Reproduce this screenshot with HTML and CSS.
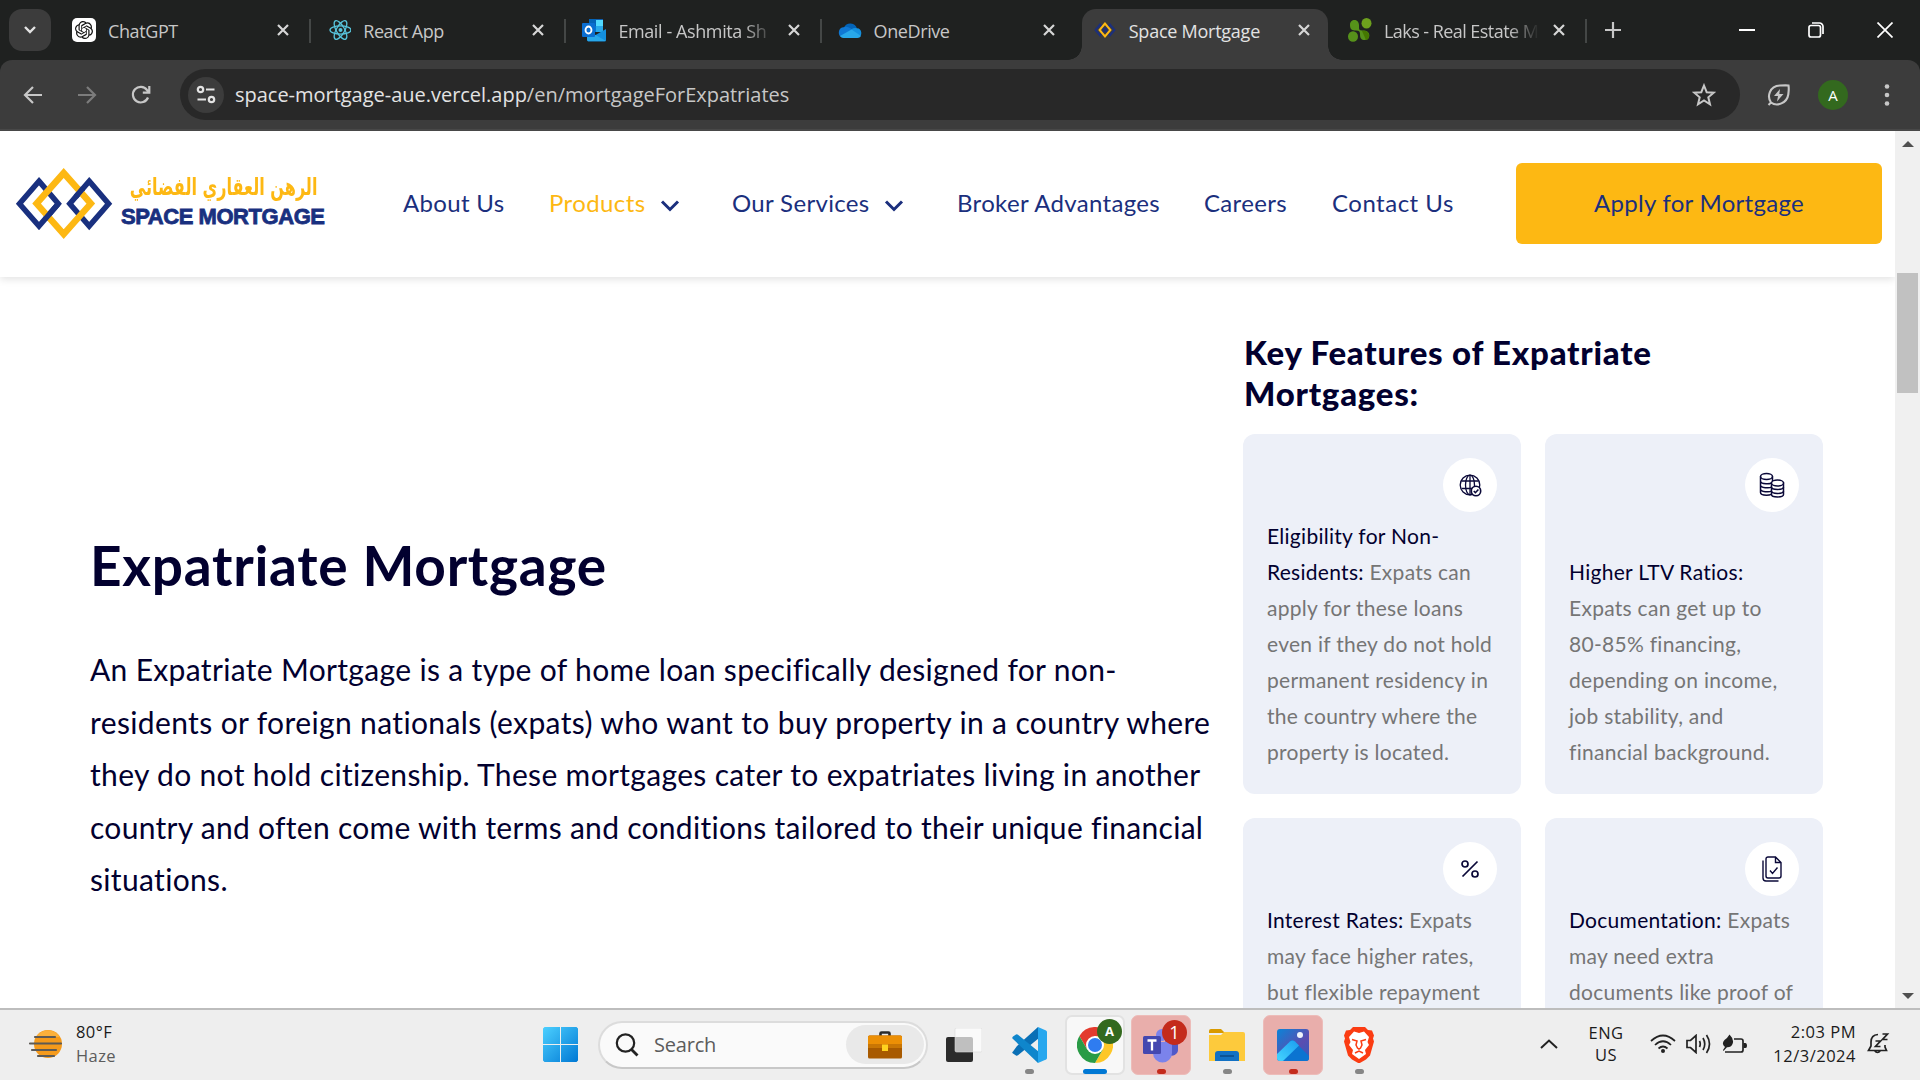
FILE: index.html
```html
<!DOCTYPE html>
<html lang="en">
<head>
<meta charset="utf-8">
<title>Space Mortgage</title>
<link rel="stylesheet" href="styles.css">
</head>
<body>
<div class="screen">

<div class="tabstrip">
  <div class="tab-search"><svg width="14" height="10" viewBox="0 0 14 10"><path d="M2 2l5 5 5-5" fill="none" stroke="#e3e3e3" stroke-width="2.4"/></svg></div>
  <div class="tab"><svg class="fav" viewBox="0 0 24 24"><rect width="24" height="24" rx="5" fill="#fff"/><g transform="translate(3 3) scale(.75)"><path fill="#111" d="M22.2819 9.8211a5.9847 5.9847 0 0 0-.5157-4.9108 6.0462 6.0462 0 0 0-6.5098-2.9A6.0651 6.0651 0 0 0 4.9807 4.1818a5.9847 5.9847 0 0 0-3.9977 2.9 6.0462 6.0462 0 0 0 .7427 7.0966 5.98 5.98 0 0 0 .511 4.9107 6.051 6.051 0 0 0 6.5146 2.9001A5.9847 5.9847 0 0 0 13.2599 24a6.0557 6.0557 0 0 0 5.7718-4.2058 5.9894 5.9894 0 0 0 3.9977-2.9001 6.0557 6.0557 0 0 0-.7475-7.0729zm-9.022 12.6081a4.4755 4.4755 0 0 1-2.8764-1.0408l.1419-.0804 4.7783-2.7582a.7948.7948 0 0 0 .3927-.6813v-6.7369l2.02 1.1686a.071.071 0 0 1 .038.052v5.5826a4.504 4.504 0 0 1-4.4945 4.4944zm-9.6607-4.1254a4.4708 4.4708 0 0 1-.5346-3.0137l.142.0852 4.783 2.7582a.7712.7712 0 0 0 .7806 0l5.8428-3.3685v2.3324a.0804.0804 0 0 1-.0332.0615L9.74 19.9502a4.4992 4.4992 0 0 1-6.1408-1.6464zM2.3408 7.8956a4.485 4.485 0 0 1 2.3655-1.9728V11.6a.7664.7664 0 0 0 .3879.6765l5.8144 3.3543-2.0201 1.1685a.0757.0757 0 0 1-.071 0l-4.8303-2.7865A4.504 4.504 0 0 1 2.3408 7.872zm16.5963 3.8558L13.1038 8.364 15.1192 7.2a.0757.0757 0 0 1 .071 0l4.8303 2.7913a4.4944 4.4944 0 0 1-.6765 8.1042v-5.6772a.79.79 0 0 0-.407-.667zm2.0107-3.0231l-.142-.0852-4.7735-2.7818a.7759.7759 0 0 0-.7854 0L9.409 9.2297V6.8974a.0662.0662 0 0 1 .0284-.0615l4.8303-2.7866a4.4992 4.4992 0 0 1 6.6802 4.66zM8.3065 12.863l-2.02-1.1638a.0804.0804 0 0 1-.038-.0567V6.0742a4.4992 4.4992 0 0 1 7.3757-3.4537l-.142.0805L8.704 5.459a.7948.7948 0 0 0-.3927.6813zm1.0976-2.3654l2.602-1.4998 2.6069 1.4998v2.9994l-2.5974 1.4997-2.6067-1.4997Z"/></g></svg><span class="tab-title">ChatGPT</span><svg class="x" viewBox="0 0 14 14"><path d="M2 2l10 10M12 2L2 12"/></svg></div>
  <div class="tab"><svg class="fav" viewBox="0 0 24 24"><g transform="translate(1.500 0)"><g fill="none" stroke="#58c4dc" stroke-width="1.3"><ellipse cx="12" cy="12" rx="10.5" ry="4.1"/><ellipse cx="12" cy="12" rx="10.5" ry="4.1" transform="rotate(60 12 12)"/><ellipse cx="12" cy="12" rx="10.5" ry="4.1" transform="rotate(120 12 12)"/></g><circle cx="12" cy="12" r="2" fill="#58c4dc"/></g></svg><span class="tab-title">React App</span><svg class="x" viewBox="0 0 14 14"><path d="M2 2l10 10M12 2L2 12"/></svg></div>
  <div class="tab"><svg class="fav" viewBox="0 0 24 24"><path d="M7 1h14v13H7z" fill="#0f5fae"/><path d="M7 1h7v6H7z" fill="#0364b8"/><path d="M14 2h7v6h-7z" fill="#50d9ff"/><path d="M14 8h7v6h-7z" fill="#28a8ea"/><path d="M7 8h7v6H7z" fill="#0078d4"/><path d="M5 22l19-11v11a1.500 1.500 0 0 1-1.500 1.500H6z" fill="#1490df"/><path d="M5 12l19 11H6.500A1.500 1.500 0 0 1 5 22z" fill="#28a8ea"/><rect y="5" width="13" height="14" rx="1" fill="#0a6ed1"/><ellipse cx="6.500" cy="12" rx="3" ry="3.500" fill="none" stroke="#fff" stroke-width="1.800"/></svg><span class="tab-title fade">Email - Ashmita Sh</span><svg class="x" viewBox="0 0 14 14"><path d="M2 2l10 10M12 2L2 12"/></svg></div>
  <div class="tab noline"><svg class="fav" viewBox="0 0 24 24"><path d="M6 9.500a7 7 0 0 1 13 1l-8 6-8-6z" fill="#0364b8"/><path d="M6 9.200c3-1 5 .3 8 2.300l-6 8H5A5.200 5.200 0 0 1 6 9.200z" fill="#0f78d4"/><path d="M13.500 11.300a6 6 0 0 1 5.500-1 4.600 4.600 0 0 1 1 9L12 17z" fill="#1490df"/><path d="M2 18l11.500-6.500L23 18a4.600 4.600 0 0 1-3.500 2H5.500A5 5 0 0 1 2 18z" fill="#28a8ea"/></svg><span class="tab-title">OneDrive</span><svg class="x" viewBox="0 0 14 14"><path d="M2 2l10 10M12 2L2 12"/></svg></div>
  <div class="tab active noline"><svg class="fav" viewBox="0 0 24 24"><g fill="none" stroke-width="2"><path d="M7 6.500L2.500 12 7 17.500l4.500-5.500zM17 6.500L12.500 12l4.500 5.500 4.500-5.500z" stroke="#1b2f7d"/><path d="M12 5.500L6.600 12l5.400 6.500 5.400-6.500z" stroke="#fdb813"/></g></svg><span class="tab-title">Space Mortgage</span><svg class="x" viewBox="0 0 14 14"><path d="M2 2l10 10M12 2L2 12"/></svg></div>
  <div class="tab"><svg class="fav" viewBox="0 0 24 24"><g fill="#56921a"><path d="M2 7C2 0 11 .500 11 7v3c0 2.500 2 2.500 5 2.500 7 0 7 9.500 1 9.500-4 0-5-2-5-6 0-2.500-1-3.500-4-3.500-4 0-6-1-6-5.500z"/><ellipse cx="18.500" cy="5.200" rx="5" ry="5.200" fill="#6da01d"/><ellipse cx="5" cy="18.500" rx="5" ry="5.300"/></g><path d="M14 13c3-1 7 0 7 5 0 2-1 4-3 4z" fill="#457800"/></svg><span class="tab-title fade tight">Laks - Real Estate M</span><svg class="x" viewBox="0 0 14 14"><path d="M2 2l10 10M12 2L2 12"/></svg></div>
  <svg class="newtab" viewBox="0 0 16 16"><path d="M8 0v16M0 8h16" stroke="#c7c7c7" stroke-width="2.200"/></svg>
  <div class="winbtns">
    <svg width="16" height="16" viewBox="0 0 16 16"><path d="M0 8h16" stroke="#fff" stroke-width="2"/></svg>
    <svg width="16" height="16" viewBox="0 0 16 16"><rect x="1" y="3.500" width="11.500" height="11.500" rx="2" fill="none" stroke="#fff" stroke-width="1.700"/><path d="M4 1h7.500A3.500 3.500 0 0 1 15 4.500V12" fill="none" stroke="#fff" stroke-width="1.700"/></svg>
    <svg width="16" height="16" viewBox="0 0 16 16"><path d="M.5.500l15 15M15.500.500l-15 15" stroke="#fff" stroke-width="1.700"/></svg>
  </div>
</div>

<div class="toolbar-back">
<div class="toolbar">
  <svg class="tb" viewBox="0 0 20 20"><path d="M19 10H2M10 2l-8 8 8 8" fill="none" stroke="#c7c7c7" stroke-width="2.200"/></svg>
  <svg class="tb" viewBox="0 0 20 20"><path d="M1 10h17M10 2l8 8-8 8" fill="none" stroke="#7c7c7c" stroke-width="2.200"/></svg>
  <svg class="tb" viewBox="0 0 20 20"><path d="M17 12.500A7.800 7.800 0 1 1 16 5l2 2.500M18.300 1v6.700h-6.500" fill="none" stroke="#c7c7c7" stroke-width="2.200"/></svg>
  <div class="omnibox">
    <div class="site"><svg width="20" height="20" viewBox="0 0 20 20"><g fill="none" stroke="#e3e3e3" stroke-width="2.200"><circle cx="4.500" cy="4.500" r="2.700"/><path d="M10 4.500h8.500M1.500 14.500H10"/><circle cx="15.500" cy="14.500" r="2.700"/></g></svg></div>
    <div class="url">space-mortgage-aue.vercel.app<i>/en/mortgageForExpatriates</i></div>
    <svg class="star" viewBox="0 0 24 24"><path d="M12 2.500l2.700 6.700 7 .5-5.400 4.600 1.700 7L12 17.500l-6 3.800 1.700-7L2.300 9.700l7-.5z" fill="none" stroke="#c7c7c7" stroke-width="2"/></svg>
  </div>
  <svg class="leaf" viewBox="0 0 24 24"><path d="M4 19.500C0 14 2 3 13 2.500c4-.2 7-.3 8.500 0 .5 3 .3 5.500-.2 9C20 20 10 24 4 19.500zm0 0L1.500 22" fill="none" stroke="#c7c7c7" stroke-width="2.100"/><path d="M13 6l-6 7h4l-1 5.500 6.500-7.500h-4.200z" fill="#c7c7c7"/></svg>
  <div class="avatar">A</div>
  <svg class="dots" viewBox="0 0 6 24"><g fill="#c7c7c7"><circle cx="3" cy="3.500" r="2.300"/><circle cx="3" cy="12" r="2.300"/><circle cx="3" cy="20.500" r="2.300"/></g></svg>
</div>
</div>

<div class="viewport">
<div class="page">
  <header class="site-header">
    <div class="logo">
      <svg width="98" height="72" viewBox="0 0 98 72" fill="none">
        <path d="M24 13.100L43.300 35.700 24 58.100 4.500 35.700z" stroke="#19307f" stroke-width="5.500"/>
        <path d="M74.200 13.100L93.600 35.700 74.200 58.100 54.800 35.700z" stroke="#19307f" stroke-width="5.500"/>
        <path d="M48.700 5L75.800 35.600 48.700 66.200 21.600 35.600z" stroke="#fdb813" stroke-width="6.500"/>
        <path d="M43.300 35.700L30 51.200M68 20.300L60.600 29" stroke="#19307f" stroke-width="5.500"/>
      </svg>
      <div class="logo-text">
        <div class="ar" lang="ar" dir="rtl"><span>الرهن العقاري الفضائي</span></div>
        <div class="en">SPACE MORTGAGE</div>
      </div>
    </div>
    <nav class="nav">
      <a>About Us</a>
      <a class="on"><span>Products</span><svg width="20" height="14" viewBox="0 0 20 14"><path d="M2 2.500l8 8 8-8" fill="none" stroke="#1b2f7d" stroke-width="3"/></svg></a>
      <a><span>Our Services</span><svg width="20" height="14" viewBox="0 0 20 14"><path d="M2 2.500l8 8 8-8" fill="none" stroke="#1b2f7d" stroke-width="3"/></svg></a>
      <a>Broker Advantages</a>
      <a>Careers</a>
      <a>Contact Us</a>
    </nav>
    <a class="apply">Apply for Mortgage</a>
  </header>
  <main class="main">
    <section class="intro">
      <h1>Expatriate Mortgage</h1>
      <p class="lead">
        <span>An Expatriate Mortgage is a type of home loan specifically designed for non-</span>
        <span>residents or foreign nationals (expats) who want to buy property in a country where</span>
        <span>they do not hold citizenship. These mortgages cater to expatriates living in another</span>
        <span>country and often come with terms and conditions tailored to their unique financial</span>
        <span>situations.</span>
      </p>
    </section>
    <section class="features">
      <h2><span>Key Features of Expatriate</span><span>Mortgages:</span></h2>
      <div class="cards">
        <article class="card"><div class="ico"><svg width="24" height="24" viewBox="0 0 24 24" fill="none" stroke="#0a0838" stroke-width="1.300"><circle cx="12" cy="12" r="9.800"/><ellipse cx="12" cy="12" rx="4.500" ry="9.800"/><path d="M12 2.200v19.600M3.500 8h17M3.500 15.500h13"/><circle cx="18" cy="18" r="4.700" fill="#fff" stroke-width="1.600"/><path d="M15.800 18l1.600 1.700 3-3.200" stroke-width="1.600"/></svg></div>
          <p><span><b>Eligibility for Non-</b></span><span><b>Residents:</b> Expats can</span><span>apply for these loans</span><span>even if they do not hold</span><span>permanent residency in</span><span>the country where the</span><span>property is located.</span></p></article>
        <article class="card"><div class="ico"><svg width="26" height="26" viewBox="0 0 26 26" fill="none" stroke="#0a0838" stroke-width="1.500"><path d="M1.500 4.500v16c0 3.500 12 3.500 12 0M1.500 9c0 3.500 11 3.500 11.500 1M1.500 13c0 3 9 3.500 11 2M1.500 17c0 3 9 3.500 11 2M13.500 4.500V9"/><ellipse cx="7.500" cy="4.500" rx="6" ry="3"/><path d="M12.500 11v11.500c0 3.300 12 3.300 12 0V11z" fill="#fff"/><ellipse cx="18.500" cy="11" rx="6" ry="3" fill="#fff"/><path d="M12.500 15c0 3.300 12 3.300 12 0M12.500 19c0 3.200 12 3.200 12 0"/></svg></div>
          <p><span><b>Higher LTV Ratios:</b></span><span>Expats can get up to</span><span>80-85% financing,</span><span>depending on income,</span><span>job stability, and</span><span>financial background.</span></p></article>
        <article class="card"><div class="ico"><svg width="20" height="20" viewBox="0 0 20 20" fill="none" stroke="#0a0838" stroke-width="1.700"><circle cx="5" cy="5" r="3"/><circle cx="15" cy="15" r="3"/><path d="M17.500 2.500l-15 15"/></svg></div>
          <p><span><b>Interest Rates:</b> Expats</span><span>may face higher rates,</span><span>but flexible repayment</span></p></article>
        <article class="card"><div class="ico"><svg width="20" height="26" viewBox="0 0 20 26" fill="none" stroke="#0a0838" stroke-width="1.400"><path d="M4 3a2 2 0 0 1 2-2h7.500L19 6.500V20a2 2 0 0 1-2 2H6a2 2 0 0 1-2-2zM13.500 1v5.500H19M1 4.500V22a3 3 0 0 0 3 3h12.500M8 14.500l2.500 3 5-6"/></svg></div>
          <p><span><b>Documentation:</b> Expats</span><span>may need extra</span><span>documents like proof of</span></p></article>
      </div>
    </section>
  </main>
</div>
<div class="scrollbar">
  <svg width="12" height="6" viewBox="0 0 12 6"><path d="M0 6l6-6 6 6z" fill="#505050"/></svg>
  <div class="thumb"></div>
  <svg class="down" width="12" height="6" viewBox="0 0 12 6"><path d="M0 0l6 6 6-6z" fill="#505050"/></svg>
</div>
</div>

<div class="taskbar">
  <div class="weather">
    <svg width="38" height="34" viewBox="0 0 38 34"><circle cx="22" cy="17" r="14" fill="#f59a1b"/><path d="M10 10A14 14 0 0 1 34 10z" fill="#fbb03b"/><g stroke="#5d5a55" stroke-width="2.200" stroke-linecap="round"><path d="M9 10h20M4 16.500h31M6 23h24M12 29h16"/></g></svg>
    <div class="wx"><div>80°F</div><div class="dim">Haze</div></div>
  </div>
  <div class="center">
    <svg class="start" viewBox="0 0 35 35"><defs><linearGradient id="w" x1="0" y1="0" x2="1" y2="1"><stop offset="0" stop-color="#4cd0ff"/><stop offset="1" stop-color="#0078d4"/></linearGradient></defs><path fill="url(#w)" d="M1.500 0H17v17H0V1.500zM18 0h15.500L35 1.500V17H18zM0 18h17v17H1.500L0 33.500zM18 18h17v15.500L33.500 35H18z"/></svg>
    <div class="search">
      <svg width="24" height="24" viewBox="0 0 24 24"><circle cx="10.500" cy="10" r="8.700" fill="none" stroke="#222" stroke-width="2.200"/><path d="M16.500 16.500l6 6" stroke="#222" stroke-width="2.800"/></svg>
      <div class="ph">Search</div>
      <div class="brief"><svg width="34" height="28" viewBox="0 0 34 28"><path d="M12.500 5V2.500q0-1 1-1h7q1 0 1 1V5" fill="none" stroke="#2a2a2a" stroke-width="2.600"/><rect y="4.500" width="34" height="23" rx="1.500" fill="#a85a00"/><path d="M0 6a1.500 1.500 0 0 1 1.500-1.500h31A1.500 1.500 0 0 1 34 6v11H0z" fill="#ec8f05"/><path d="M0 13h34v4H0z" fill="#c97604"/><rect x="14" y="13.500" width="6" height="6.500" fill="#ffd21f"/></svg></div>
    </div>
    <svg class="tview" viewBox="0 0 36 34"><rect y="9" width="27" height="25" rx="2" fill="#2b2b2b"/><rect x="9" width="27" height="24" rx="1.500" fill="#fff" fill-opacity=".7" stroke="#d8d8d8" stroke-width=".6"/></svg>
    <div class="app"><svg class="i36" viewBox="0 0 36 36"><path d="M27 0L6 19 2 24.500q-1.500 1 0 2l3 2q1 .5 2-.3L28 11z" fill="#0a6fb5"/><path d="M27 36L2 12q-1.500-1 0-2.500L5 7.500q1-.7 2 .2L28 25z" fill="#0f86cc"/><path d="M27 0l8 3.500q1 .5 1 1.500v26q0 1-1 1.500L27 36z" fill="#27a7ee"/></svg><s></s></div>
    <div class="app lit"><svg class="i36" viewBox="-18 -18 36 36"><circle r="18" fill="#fff"/><path d="M-15.600-9A18 18 0 0 1 15.600-9L0-9-7.800 4.500z" fill="#e33b2e"/><path d="M15.600-9A18 18 0 0 1 0 18L7.800 4.500 0-9z" fill="#fdc727"/><path d="M0 18A18 18 0 0 1-15.600-9L-7.800 4.500 7.800 4.500z" fill="#2a9b46"/><circle r="9" fill="#fff"/><circle r="7" fill="#2f7cf0"/></svg><em class="grn">A</em><s></s></div>
    <div class="app red"><svg class="i36" viewBox="0 0 36 36"><circle cx="29" cy="10" r="4" fill="#5059c9"/><path d="M22 13h13v9a6 6 0 0 1-10 5z" fill="#5059c9"/><circle cx="19" cy="8" r="6" fill="#7b83eb"/><path d="M10 15h19v11a9.500 9.500 0 0 1-19 0z" fill="#7b83eb"/><rect y="9" width="18" height="18" rx="1.500" fill="#4448b0"/><path d="M4.500 13.500h9M9 13.500v10" stroke="#fff" stroke-width="2.300"/></svg><em class="crimson">1</em><s></s></div>
    <div class="app"><svg class="i36" viewBox="0 0 36 36"><path d="M0 4q0-2 2-2h10l4 4H0z" fill="#d99a00"/><path d="M0 8h12l3-3h19q2 0 2 2v27H0z" fill="#fdca3c"/><path d="M6 34v-7q0-3 3-3h18q3 0 3 3v7z" fill="#1271c4"/><path d="M11 29h14" stroke="#0b4a86" stroke-width="1.500"/></svg><s></s></div>
    <div class="app red"><svg class="i32" viewBox="0 0 32 32"><defs><linearGradient id="p" x1="0" y1="0" x2="1" y2="1"><stop offset="0" stop-color="#0a84d8"/><stop offset=".6" stop-color="#5b4db0"/><stop offset="1" stop-color="#2b5fc0"/></linearGradient><linearGradient id="q" x1="0" y1="1" x2="1" y2="0"><stop offset="0" stop-color="#45d5ff"/><stop offset="1" stop-color="#1b9df0"/></linearGradient></defs><rect width="32" height="32" rx="3" fill="url(#p)"/><path d="M13 12q2-1.500 4.500.5L32 27v2q0 3-3 3H4z" fill="#0b74d1"/><path d="M13 12.500q2.500-2 5 0l4 4L6 32H3q-3 0-3-3v-4z" fill="url(#q)"/><circle cx="23" cy="6" r="3" fill="#eef3fb"/></svg><s></s></div>
    <div class="app"><svg class="i36" viewBox="0 0 36 36"><path d="M12 0h12l3 3 4 .5 2 5-1 3 1 3-4 14-4 4-7 4-7-4-4-4-4-14 1-3-1-3 2-5 4-.5z" fill="#fb3c12"/><path d="M18 6l5-1.500 5 5.500-1.500 5L28 18l-4 5 1 4-7 5-7-5 1-4-4-5 1.500-3L8 10l5-5.500z" fill="#fff"/><path d="M11 12.500l5 1.500-1 4 1.500 3L18 22l1.500-1 1.500-3-1-4 5-1.500M14 26l4-2 4 2" fill="none" stroke="#fb3c12" stroke-width="1.500"/></svg><s></s></div>
  </div>
  <div class="tray">
    <svg class="up" width="18" height="10" viewBox="0 0 18 10"><path d="M1 9l8-7.500L17 9" fill="none" stroke="#222" stroke-width="2"/></svg>
    <div class="lang"><div>ENG</div><div>US</div></div>
    <svg class="wifi" width="26" height="20" viewBox="0 0 26 20" fill="none" stroke="#222" stroke-width="1.700"><path d="M1 7q12-11 24 0M5 11q8-7.500 16 0M8.500 14.500q4.500-4 9 0"/><circle cx="13" cy="17" r="2" fill="#222" stroke="none"/></svg>
    <svg class="vol" width="26" height="20" viewBox="0 0 26 20" fill="none" stroke="#222" stroke-width="1.700"><path d="M1 6.500h3.500L10 1.500v17L4.500 13.500H1zM13.500 7q1.500 3 0 6M17 4q3.500 6 0 12M20.500 1q6 9 0 18"/></svg>
    <svg class="bat" width="26" height="20" viewBox="0 0 26 20" fill="none" stroke="#222" stroke-width="1.700"><path d="M12 5h7q2 0 2 2v9q0 2-2 2H3"/><path d="M21.500 9v5h2q1.500 0 1.500-2.500T23.500 9z" fill="#222" stroke="none"/><path d="M7.500.5q5 5 3 9.500Q9 13.500 5 13.200L1.500 17 1 16l2-3Q-1 10 2.500 6q3-2 5-5.500z" fill="#222" stroke="none"/></svg>
    <div class="clock"><div>2:03 PM</div><div>12/3/2024</div></div>
    <svg class="bell" width="24" height="24" viewBox="0 0 24 24" fill="none" stroke="#222" stroke-width="1.700"><path d="M11 2.500Q4 3 4 10v4l-2.500 4.500h18L18 15v-2M7.500 18.500q3 4 6 0"/><path d="M8.500 9h5l-5 5.500h5M15.500 2h5l-5 5.500h5"/></svg>
  </div>
</div>
</div>
</body>
</html>
```
FILE: styles.css
```css
* { box-sizing: border-box; }
body { margin: 0; overflow: hidden; font-family: "Open Sans", "Noto Sans", sans-serif; }
svg { display: block; flex: none; }
.screen { width: 1920px; height: 1080px; display: flex; flex-direction: column; background: #fff; }

/* Browser tabs */
.tabstrip { height: 60px; background: #1f2120; display: flex; align-items: center; padding-left: 9px; flex: none; }
.tab-search { width: 42px; height: 42px; border-radius: 13px; background: #3c3c3c; display: flex; align-items: center; justify-content: center; margin-right: 5px; }
.tab { position: relative; width: 255.2px; height: 51px; align-self: flex-end; display: flex; align-items: center; padding: 0 21px 9px 16px; flex: none; }
.fav { width: 24px; height: 24px; margin-right: 12px; }
.tab-title { flex: 1; padding-top: 2px; font-size: 18px; letter-spacing: -.4px; color: #c7c7c7; white-space: nowrap; }
.fade { -webkit-mask-image: linear-gradient(90deg, #000 78%, transparent 97%); mask-image: linear-gradient(90deg, #000 78%, transparent 97%); }
.tight { letter-spacing: -.55px; }
.x { width: 14px; height: 14px; margin-left: 8px; stroke: #d6d6d6; stroke-width: 2.2; }
.tab:not(.noline)::after { content: ""; position: absolute; right: 0; top: 10px; width: 2px; height: 24px; background: #444746; }
.active { isolation: isolate; }
.active::before { content: ""; position: absolute; left: 5px; top: 0; width: 246px; height: 51px; border-radius: 14px 14px 0 0; background: #3c3c3c; z-index: -1; }
.active::after { content: ""; position: absolute; left: -9px; bottom: 0; width: 274px; height: 14px; z-index: -1;
  background:
    radial-gradient(circle at 0 0, transparent 13.5px, #3c3c3c 14px) 0 0 / 14px 14px no-repeat,
    radial-gradient(circle at 100% 0, transparent 13.5px, #3c3c3c 14px) 100% 0 / 14px 14px no-repeat; }
.active .tab-title { color: #e3e3e3; letter-spacing: -.25px; }
.newtab { width: 16px; height: 16px; margin-left: 18px; }
.winbtns { margin-left: auto; display: flex; gap: 53px; padding-right: 27px; }

/* Browser toolbar */
.toolbar-back { background: #1f2120; flex: none; }
.toolbar { height: 71px; background: #3c3c3c; border-radius: 12px 12px 0 0; box-shadow: inset 0 -2px #484848; display: flex; align-items: center; padding: 0 0 2px 23px; }
.tb { width: 20px; height: 20px; margin-right: 34px; }
.omnibox { width: 1560px; height: 51px; border-radius: 26px; background: #282828; display: flex; align-items: center; padding: 0 24px 0 8px; margin-left: -5px; }
.site { width: 36px; height: 36px; border-radius: 18px; background: #3c3c3c; display: flex; align-items: center; justify-content: center; margin-right: 11px; }
.url { flex: 1; font-size: 20px; letter-spacing: -.02px; color: #e3e3e3; white-space: nowrap; }
.url i { font-style: normal; color: #c7c7c7; }
.star { width: 24px; height: 24px; }
.leaf { width: 24px; height: 24px; margin: 0 27px; }
.avatar { width: 30px; height: 30px; border-radius: 15px; background: #33691e; color: #fff; font-size: 15px; line-height: 30px; text-align: center; margin-right: 36px; }
.dots { width: 6px; height: 24px; }

/* Web page */
.viewport { height: 877px; display: flex; flex: none; overflow: hidden; }
.page { width: 1895px; overflow: hidden; font-family: Lato, "Noto Sans", sans-serif; }
.site-header { height: 146px; display: flex; align-items: center; padding: 0 13px 0 15px; box-shadow: 0 2px 8px rgba(0,0,0,.12); }
.logo { display: flex; width: 388px; }
.logo-text { width: 205px; margin-left: 8px; padding-top: 3px; }
.ar { font: bold 21px/32px "DejaVu Sans", sans-serif; color: #fdb813; white-space: nowrap; padding-right: 9px; height: 32px; }
.ar span { display: inline-block; transform: scale(.765, 1.15); transform-origin: right; }
.en { font: bold 22px/26px "Liberation Sans", sans-serif; color: #19307f; -webkit-text-stroke: .8px #19307f; letter-spacing: -.45px; white-space: nowrap; padding-top: 1px; }
.nav { width: 1113px; margin-top: -2px; display: grid; grid-template-columns: 146px 183px 225px 247px 128px auto; font-size: 24px; line-height: 36px; letter-spacing: .33px; color: #1b2f7d; white-space: nowrap; }
.nav a { display: flex; align-items: center; }
.nav svg { margin: 6px 0 0 14px; }
.nav .on span { color: #fdb813; letter-spacing: .4px; }
.nav a:last-child { letter-spacing: .5px; }
.apply { width: 366px; height: 81px; margin-top: -2px; background: #fdb813; border-radius: 6px; color: #1b2f7d; font-size: 24px; line-height: 80px; letter-spacing: .28px; text-align: center; }
.main { display: flex; padding: 54px 72px 0 90px; color: #02002f; }
.intro { width: 1153px; padding-top: 202px; }
h1 { margin: 0 0 45px; font-size: 55px; line-height: 65px; font-weight: 700; letter-spacing: .72px; white-space: nowrap; }
.lead { margin: 0; font-size: 30px; line-height: 52.5px; letter-spacing: .335px; }
.lead span, h2 span, .card p > span { display: block; white-space: nowrap; }
.lead span:nth-child(2) { letter-spacing: .37px; }
.lead span:nth-child(4) { letter-spacing: .29px; }
.features { width: 580px; }
h2 { margin: 0; padding: 1px 0 20px 1px; font-size: 33px; line-height: 41px; font-weight: 900; letter-spacing: .75px; }
.cards { display: grid; grid-template-columns: 278px 278px; grid-template-rows: 360px 360px; gap: 24px; }
.card { background: #edf0f8; border-radius: 12px; padding: 24px; display: flex; flex-direction: column; justify-content: space-between; }
.card:nth-child(n+3) { justify-content: flex-start; gap: 6px; }
.ico { width: 54px; height: 54px; border-radius: 27px; background: #fff; align-self: flex-end; display: flex; align-items: center; justify-content: center; }
.card p { margin: 0; font-size: 21px; line-height: 36px; letter-spacing: .28px; color: #757575; }
.card b { font-weight: 400; color: #02002f; }

.scrollbar { width: 25px; background: #f0f0f0; display: flex; flex-direction: column; align-items: center; padding: 10px 0 9px; }
.thumb { width: 21px; height: 120px; background: #c1c1c1; margin-top: 126px; }
.down { margin-top: auto; }

/* Taskbar */
.taskbar { height: 72px; background: #eee; border-top: 2px solid #bdbdbd; display: flex; flex: none; color: #1b1b1b; }
.weather { width: 543px; display: flex; padding: 17px 0 0 26px; }
.wx { margin: -7px 0 0 12px; font-size: 16.5px; line-height: 24px; letter-spacing: .4px; }
.dim { color: #5c5c5c; }
.center { display: flex; align-items: center; width: 850px; padding-bottom: 1px; }
.start { width: 35px; height: 35px; }
.search { width: 330px; height: 48px; margin: 0 18px 0 20px; border: 2px solid #dcdcdc; border-bottom-color: #c8c8c8; border-radius: 24px; background: #fafafa; display: flex; align-items: center; padding: 0 2px 0 15px; flex: none; }
.ph { flex: 1; padding-left: 15px; font-size: 20px; letter-spacing: -.2px; color: #5c5c5c; }
.brief { width: 78px; height: 39px; border-radius: 20px; background: #e9e9e9; display: flex; align-items: center; justify-content: center; }
.tview { width: 36px; height: 34px; margin-right: 17px; }
.app { position: relative; width: 60px; height: 60px; margin-right: 6px; border-radius: 7px; display: flex; align-items: center; justify-content: center; flex: none; }
.i36 { width: 36px; height: 36px; }
.i32 { width: 32px; height: 32px; }
.lit { background: #f8f8f8; border: 2px solid #e2e2e2; }
.red { background: #e9aeab; border: 1px solid #edbcb9; }
.app s { position: absolute; left: 50%; bottom: 1px; width: 9px; height: 5px; margin-left: -4.5px; border-radius: 3px; background: #868686; }
.lit s { width: 24px; margin-left: -12px; bottom: -1px; background: #0078d4; }
.red s { bottom: 0; background: #c42b1c; }
.app em { position: absolute; right: 3px; top: 4px; width: 25px; height: 25px; border-radius: 13px; font-style: normal; text-align: center; color: #fff; }
.app .grn { right: 1px; top: 2px; background: #33691e; font: bold 13px/25px "Open Sans", sans-serif; }
.app .crimson { background: #c42b1c; font-size: 18px; line-height: 25px; }
.tray { margin-left: auto; width: 380px; display: flex; align-items: center; font-size: 16.5px; line-height: 22px; letter-spacing: .4px; padding-bottom: 2px; }
.lang { width: 36px; margin: 0 26px 0 30px; text-align: center; white-space: nowrap; }
.vol { margin: 0 10px; }
.clock { width: 108px; text-align: right; line-height: 24px; letter-spacing: .5px; white-space: nowrap; margin-right: 11px; }
```
